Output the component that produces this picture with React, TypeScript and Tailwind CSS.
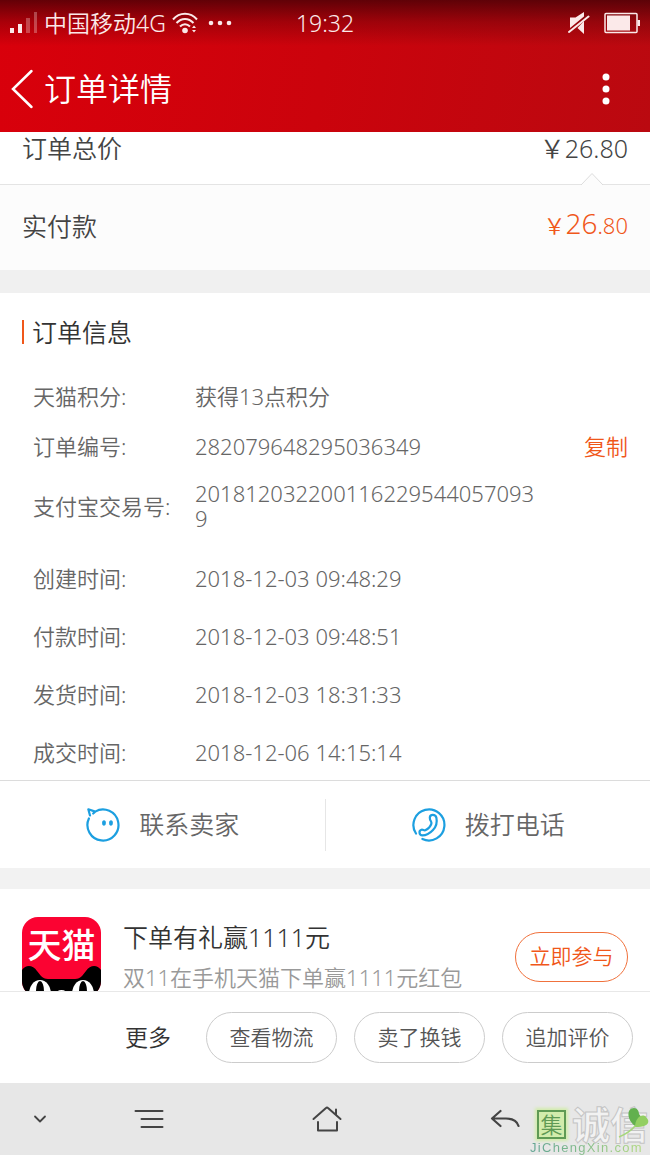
import React from 'react';

interface OrderField {
  label: string;
  value: string;
}

const ORDER_FIELDS: OrderField[] = [
  { label: '天猫积分:', value: '获得13点积分' },
  { label: '订单编号:', value: '282079648295036349' },
  { label: '支付宝交易号:', value: '2018120322001162295440570939' },
];

const ORDER_TIMES: OrderField[] = [
  { label: '创建时间:', value: '2018-12-03 09:48:29' },
  { label: '付款时间:', value: '2018-12-03 09:48:51' },
  { label: '发货时间:', value: '2018-12-03 18:31:33' },
  { label: '成交时间:', value: '2018-12-06 14:15:14' },
];

const ORDER_ACTIONS = ['查看物流', '卖了换钱', '追加评价'];

function StatusBar() {
  return (
    <div className="grid grid-cols-[1fr_auto_1fr] items-center h-[46px] px-[10px] text-[23px] leading-[44px] text-[#fbe9e9]">
      <div className="flex items-center">
        <svg width="28" height="24" viewBox="0 0 28 24" fill="currentColor" aria-hidden="true">
          <rect x="0" y="17" width="4" height="5" />
          <rect x="8" y="13" width="4" height="9" />
          <rect x="16" y="7" width="4" height="15" opacity="0.3" />
          <rect x="24" y="1" width="3" height="21" opacity="0.3" />
        </svg>
        <span className="ml-1.5 whitespace-nowrap">中国移动4G</span>
        <svg className="ml-1.5 shrink-0" width="26" height="22" viewBox="0 0 26 22" fill="none" stroke="currentColor" strokeWidth="2" aria-hidden="true">
          <path d="M1 7.5C7.5-.2 18.5-.2 25 7.5" />
          <path d="M4.5 11C9.5 5.5 16.5 5.5 21.5 11" />
          <path d="M8 14.5C11 11.5 15 11.5 18 14.5" />
          <circle cx="13" cy="18.5" r="2.8" fill="currentColor" stroke="none" />
          <path d="M20 16l2-2.500 2 2.500zM20 18l2 2.500 2-2.500z" fill="currentColor" stroke="none" />
        </svg>
        <svg className="ml-2.5 shrink-0" width="24" height="6" viewBox="0 0 24 6" fill="currentColor" aria-hidden="true">
          <circle cx="3" cy="3" r="2.3" />
          <circle cx="12" cy="3" r="2.3" />
          <circle cx="21" cy="3" r="2.3" />
        </svg>
      </div>
      <span>19:32</span>
      <div className="flex items-center justify-end gap-3.5">
        <svg width="22" height="24" viewBox="0 0 22 24" fill="currentColor" aria-hidden="true">
          <path d="M2 6.500h5.500L16 1v4.500L2 17zM16 10v13l-6.500-6z" />
          <path d="M1 21L20.500 5.500" stroke="currentColor" strokeWidth="2" strokeLinecap="round" />
        </svg>
        <svg width="36" height="22" viewBox="0 0 36 22" fill="currentColor" aria-hidden="true">
          <rect x="1" y="1.5" width="32" height="19" rx="1" fill="none" stroke="currentColor" strokeWidth="1.5" />
          <rect x="3" y="3.5" width="23" height="15" />
          <rect x="33.5" y="8" width="2.5" height="6" />
        </svg>
      </div>
    </div>
  );
}

function Header() {
  return (
    <header className="h-[132px] bg-[linear-gradient(180deg,rgba(60,0,5,0.75)_0,rgba(60,0,5,0.3)_22px,rgba(60,0,5,0)_46px),linear-gradient(100deg,#d9000b,#cb030c_50%,#ba0910)]">
      <StatusBar />
      <div className="flex h-[86px] items-center pl-[10px] pr-10 text-white">
        <button type="button" aria-label="返回" className="cursor-pointer">
          <svg width="24" height="40" viewBox="0 0 24 40" fill="none" stroke="currentColor" strokeWidth="2.5" strokeLinecap="round" aria-hidden="true">
            <path d="M21.500 2L3 20l18.500 18" />
          </svg>
        </button>
        <h1 className="ml-2.5 text-[32px] leading-10">订单详情</h1>
        <button type="button" aria-label="更多操作" className="ml-auto cursor-pointer">
          <svg width="8" height="32" viewBox="0 0 8 32" fill="currentColor" aria-hidden="true">
            <circle cx="4" cy="4" r="3.5" />
            <circle cx="4" cy="16" r="3.5" />
            <circle cx="4" cy="28" r="3.5" />
          </svg>
        </button>
      </div>
    </header>
  );
}

function PriceSummary() {
  return (
    <section className="text-[25px] text-[#444]">
      <div className="relative flex justify-between px-[22px] pb-5 leading-8 border-b border-[#e4e4e4]">
        <span>订单总价</span>
        <span>￥26.80</span>
        <svg className="absolute right-[46px] -bottom-px" width="24" height="13" viewBox="0 0 24 13" fill="#fcfcfc" stroke="#dcdcdc" aria-hidden="true">
          <path d="M1 13L12 1.500 23 13" />
        </svg>
      </div>
      <div className="flex h-[85px] items-center justify-between bg-[#fcfcfc] px-[22px] pb-1 leading-8">
        <span>实付款</span>
        <span className="pb-1 text-[22px] text-[#f0571a]">
          ￥<span className="text-[28px]">26</span>.80
        </span>
      </div>
    </section>
  );
}

function FieldRow({ label, value }: OrderField) {
  return (
    <div className="flex min-h-[30px] items-center leading-[25px]">
      <dt className="w-[162px] shrink-0">{label}</dt>
      <dd className="w-[346px] break-all">{value}</dd>
      {label === '订单编号:' && (
        <dd className="ml-auto">
          <button type="button" className="cursor-pointer text-[#f0571a]">
            复制
          </button>
        </dd>
      )}
    </div>
  );
}

function OrderInfo() {
  return (
    <section className="px-[22px] pt-[22px] pb-[13px]">
      <h2 className="flex items-center gap-2 text-[25px] leading-[34px] text-[#333]">
        <span className="h-6 w-0.5 bg-[#f0571a]" />
        订单信息
      </h2>
      <dl className="mt-8 pl-[11px] text-[22px] text-[#666]">
        <div className="space-y-5">
          {ORDER_FIELDS.map((field) => (
            <FieldRow key={field.label} {...field} />
          ))}
        </div>
        <div className="mt-8 space-y-7">
          {ORDER_TIMES.map((field) => (
            <FieldRow key={field.label} {...field} />
          ))}
        </div>
      </dl>
    </section>
  );
}

function ContactBar() {
  return (
    <div className="flex h-[88px] items-center border-t border-[#dcdcdc] text-[25px] text-[#666]">
      <button type="button" className="flex flex-1 cursor-pointer items-center justify-center gap-[18px]">
        <svg width="36" height="36" viewBox="0 0 36 36" fill="none" stroke="#1c9fe0" strokeWidth="2.2" strokeLinecap="round" strokeLinejoin="round" aria-hidden="true">
          <path d="M3.900 11.500A15.500 15.500 0 1 0 10.200 4.600L3.300 2.300 5 8.500M10.200 4.600L8.200 6.500" />
          <ellipse cx="19" cy="16" rx="1.9" ry="2.8" fill="#1c9fe0" stroke="none" />
          <ellipse cx="26" cy="16" rx="1.9" ry="2.8" fill="#1c9fe0" stroke="none" />
        </svg>
        联系卖家
      </button>
      <span className="h-[52px] w-px bg-[#e6e6e6]" />
      <button type="button" className="flex flex-1 cursor-pointer items-center justify-center gap-[18px]">
        <svg width="36" height="36" viewBox="0 0 36 36" fill="none" stroke="#1c9fe0" strokeWidth="2.2" strokeLinecap="round" strokeLinejoin="round" aria-hidden="true">
          <path d="M5 26.500A15.500 15.500 0 1 1 11.400 32" />
          <path d="M18.800 10.600c.2-3.600 5.700-3.600 6.600.2 1 5-.4 9.200-3.400 12.200-3 3.200-6.600 5.400-10.600 5.400-3.400-.2-3.900-4.600-1-5.600 1.600-.5 2.400.9 3.900.4 3-1.400 5.300-4 6.100-6.600.5-2.400-1.700-2.600-1.600-6z" />
        </svg>
        拨打电话
      </button>
    </div>
  );
}

function TmallLogo() {
  return (
    <svg className="shrink-0" width="80" height="80" viewBox="0 0 80 80" aria-hidden="true">
      <defs>
        <clipPath id="logo-shape">
          <rect width="79" height="80" rx="16" />
        </clipPath>
      </defs>
      <g clipPath="url(#logo-shape)">
        <rect width="80" height="80" fill="#fb0332" />
        <path d="M0 53C4 47 11 48 15 54l4 5c2 2 4 3 7 3h27c3 0 5-1 7-3l4-5c4-6 11-7 15-1v27H0z" fill="#000" />
        <ellipse cx="18" cy="77" rx="11" ry="14" fill="#fff" />
        <ellipse cx="61" cy="77" rx="11" ry="14" fill="#fff" />
        <ellipse cx="18" cy="74" rx="4" ry="10" fill="#000" />
        <ellipse cx="61" cy="74" rx="4" ry="10" fill="#000" />
        <ellipse cx="39.5" cy="75" rx="4" ry="2" fill="#fff" />
        <text x="39.5" y="41" textAnchor="middle" fontSize="34" fontWeight="500" fill="#fff">
          天猫
        </text>
      </g>
    </svg>
  );
}

function Promo() {
  return (
    <section className="flex h-[102px] items-start overflow-hidden px-[22px] pt-7">
      <TmallLogo />
      <div className="ml-[21px] whitespace-nowrap">
        <h3 className="text-[25px] leading-10 text-[#333]">下单有礼赢1111元</h3>
        <p className="mt-2 text-[22px] leading-6 text-[#999]">双11在手机天猫下单赢1111元红包</p>
      </div>
      <button
        type="button"
        className="mt-[15px] ml-auto h-[50px] w-[113px] shrink-0 cursor-pointer rounded-full border border-[#f0713c] text-[21px] text-[#f0571a]"
      >
        立即参与
      </button>
    </section>
  );
}

function ActionBar() {
  return (
    <div className="flex h-[92px] items-center justify-end gap-[17px] border-t border-[#e8e8e8] pr-[17px] text-[21px] text-[#555]">
      <button type="button" className="mr-[18px] cursor-pointer text-[23px] text-[#333]">
        更多
      </button>
      {ORDER_ACTIONS.map((action) => (
        <button
          key={action}
          type="button"
          className="h-[51px] w-[131px] cursor-pointer rounded-full border border-[#ccc]"
        >
          {action}
        </button>
      ))}
    </div>
  );
}

function Watermark() {
  return (
    <div className="absolute right-0 bottom-0 w-[120px] whitespace-nowrap">
      <div className="flex items-center pl-[7px]">
        <span className="h-[29px] w-[29px] shrink-0 border-2 border-[#5f9a55] bg-[#d2ecac] text-center text-[22px] leading-[24px] text-[#5f9a55] shadow-[0_0_3px_2px_#d2ecac]">
          集
        </span>
        <span className="ml-1.5 text-[38px] leading-[34px] font-bold text-[#f2f2f2] [-webkit-text-stroke:1px_#c4c4c4]">诚信</span>
      </div>
      <svg className="absolute top-0 right-0" width="32" height="32" viewBox="0 0 32 32" aria-hidden="true">
        <path d="M17 19C9 13 8 1 16 1c3 0 5 3 5 6 4 4 1 9-4 12z" fill="#62b04e" />
        <path d="M17 20c0-9 7-14 11-10 5 5 2 10-11 10z" fill="#93cf62" />
        <path d="M17 19C13 24 8 27 1 30" fill="none" stroke="#a6d67c" strokeWidth="1.5" />
      </svg>
      <p className="bg-gradient-to-r from-[#5fa391] to-[#b4dc7c] bg-clip-text font-['Liberation_Sans'] text-[13px] leading-[14px] font-normal tracking-widest text-transparent">
        JiChengXin.com
      </p>
    </div>
  );
}

function NavigationBar() {
  return (
    <nav className="relative grid h-[72px] grid-cols-[80px_138px_1fr_138px_76px] place-items-center bg-[#e7e7e7] text-[#444]">
      <button type="button" aria-label="收起" className="cursor-pointer">
        <svg width="14" height="8" viewBox="0 0 14 8" fill="none" stroke="currentColor" strokeWidth="1.8" strokeLinecap="round" strokeLinejoin="round" aria-hidden="true">
          <path d="M2 1.500l5 5 5-5" />
        </svg>
      </button>
      <button type="button" aria-label="菜单" className="cursor-pointer">
        <svg width="30" height="20" viewBox="0 0 30 20" fill="none" stroke="currentColor" strokeWidth="2" strokeLinecap="round" aria-hidden="true">
          <path d="M1.500 2h27M7.500 10h21M7.500 18h21" />
        </svg>
      </button>
      <button type="button" aria-label="主页" className="cursor-pointer">
        <svg width="30" height="28" viewBox="0 0 30 28" fill="none" stroke="currentColor" strokeWidth="2" strokeLinecap="round" strokeLinejoin="round" aria-hidden="true">
          <path d="M1.500 14L14 3q1-1 2 0l12.500 11M24 4.500v5M6 17v8.500h19V17" />
        </svg>
      </button>
      <button type="button" aria-label="后退" className="cursor-pointer">
        <svg width="30" height="20" viewBox="0 0 30 20" fill="none" stroke="currentColor" strokeWidth="2.2" strokeLinecap="round" strokeLinejoin="round" aria-hidden="true">
          <path d="M10.500 2L2 9.500l8.500 7.500M2 9.500h14c7 0 11 2 12.500 7.500" />
        </svg>
      </button>
      <Watermark />
    </nav>
  );
}

export default function App() {
  return (
    <div lang="zh-CN" className="bg-white font-['Noto_Sans','Noto_Sans_CJK_SC',sans-serif] font-[350]">
      <Header />
      <main>
        <PriceSummary />
        <div className="h-[23px] bg-[#f0f0f0]" />
        <OrderInfo />
        <ContactBar />
        <div className="h-[21px] bg-[#f2f2f2]" />
        <Promo />
      </main>
      <ActionBar />
      <NavigationBar />
    </div>
  );
}
